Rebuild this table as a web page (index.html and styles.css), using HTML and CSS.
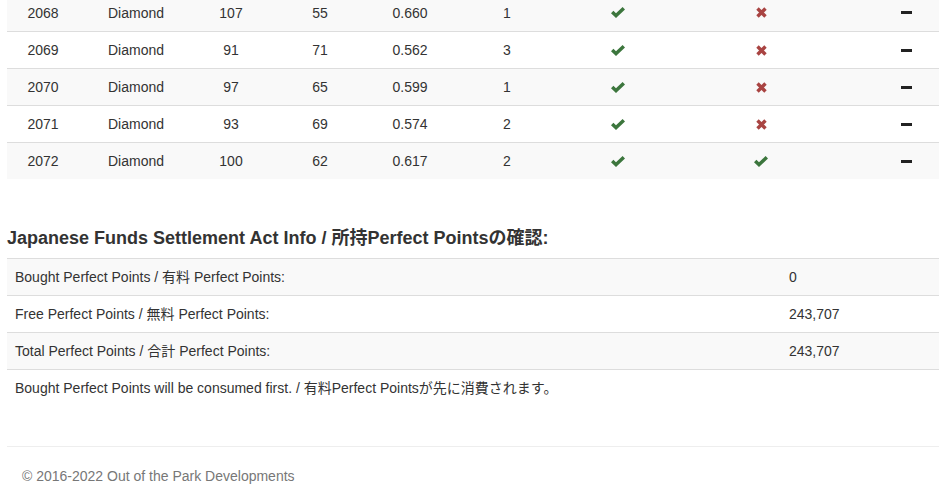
FILE: index.html
```html
<!DOCTYPE html>
<html>
<head>
<meta charset="utf-8">
<link rel="stylesheet" href="styles.css">
</head>
<body>
<div class="page">
  <div class="grid-table">
    <div class="row shade">
      <div>2068</div><div>Diamond</div><div>107</div><div>55</div><div>0.660</div><div>1</div>
      <div><svg class="ok" viewBox="0 0 14 11"><polygon points="0,6.2 2.4,3.8 5,6.3 11.6,0 14,2.4 5,11"/></svg></div>
      <div><svg class="no" viewBox="0 0 11 11"><path d="M1.5 1.5L9.5 9.5M9.5 1.5L1.5 9.5"/></svg></div>
      <div class="last"><span class="minus"></span></div>
    </div>
    <div class="row">
      <div>2069</div><div>Diamond</div><div>91</div><div>71</div><div>0.562</div><div>3</div>
      <div><svg class="ok" viewBox="0 0 14 11"><polygon points="0,6.2 2.4,3.8 5,6.3 11.6,0 14,2.4 5,11"/></svg></div>
      <div><svg class="no" viewBox="0 0 11 11"><path d="M1.5 1.5L9.5 9.5M9.5 1.5L1.5 9.5"/></svg></div>
      <div class="last"><span class="minus"></span></div>
    </div>
    <div class="row shade">
      <div>2070</div><div>Diamond</div><div>97</div><div>65</div><div>0.599</div><div>1</div>
      <div><svg class="ok" viewBox="0 0 14 11"><polygon points="0,6.2 2.4,3.8 5,6.3 11.6,0 14,2.4 5,11"/></svg></div>
      <div><svg class="no" viewBox="0 0 11 11"><path d="M1.5 1.5L9.5 9.5M9.5 1.5L1.5 9.5"/></svg></div>
      <div class="last"><span class="minus"></span></div>
    </div>
    <div class="row">
      <div>2071</div><div>Diamond</div><div>93</div><div>69</div><div>0.574</div><div>2</div>
      <div><svg class="ok" viewBox="0 0 14 11"><polygon points="0,6.2 2.4,3.8 5,6.3 11.6,0 14,2.4 5,11"/></svg></div>
      <div><svg class="no" viewBox="0 0 11 11"><path d="M1.5 1.5L9.5 9.5M9.5 1.5L1.5 9.5"/></svg></div>
      <div class="last"><span class="minus"></span></div>
    </div>
    <div class="row shade">
      <div>2072</div><div>Diamond</div><div>100</div><div>62</div><div>0.617</div><div>2</div>
      <div><svg class="ok" viewBox="0 0 14 11"><polygon points="0,6.2 2.4,3.8 5,6.3 11.6,0 14,2.4 5,11"/></svg></div>
      <div><svg class="ok" viewBox="0 0 14 11"><polygon points="0,6.2 2.4,3.8 5,6.3 11.6,0 14,2.4 5,11"/></svg></div>
      <div class="last"><span class="minus"></span></div>
    </div>
  </div>

  <h4 class="title">Japanese Funds Settlement Act Info / 所持Perfect Pointsの確認:</h4>

  <div class="info">
    <div class="irow shade"><div class="label">Bought Perfect Points / 有料 Perfect Points:</div><div class="val">0</div></div>
    <div class="irow"><div class="label">Free Perfect Points / 無料 Perfect Points:</div><div class="val">243,707</div></div>
    <div class="irow shade"><div class="label">Total Perfect Points / 合計 Perfect Points:</div><div class="val">243,707</div></div>
    <div class="irow note"><div class="label">Bought Perfect Points will be consumed first. / 有料Perfect Pointsが先に消費されます。</div></div>
  </div>

  <hr class="rule">
  <footer class="foot">© 2016-2022 Out of the Park Developments</footer>
</div>
</body>
</html>
```

FILE: styles.css
```css
html, body {
  margin: 0;
  padding: 0;
  background: #fff;
  overflow: hidden;
}
body {
  font-family: "Liberation Sans", Arial, "Noto Sans CJK JP", sans-serif;
  font-size: 14px;
  line-height: 20px;
  color: #333;
}
.page {
  padding-left: 7px;
  margin-top: -6px;
}
.grid-table {
  width: 932px;
  margin-bottom: 49px;
}
.row {
  display: grid;
  grid-template-columns: 72px 114px 76px 102px 78px 116px 106px 180px 1fr;
  border-top: 1px solid #ddd;
  height: 36px;
  align-items: center;
}
.row:first-child { border-top: none; height: 37px; }
.row > div {
  text-align: center;
  display: flex;
  justify-content: center;
  align-items: center;
}
.row > div.last { padding-left: 22px; }
.shade { background: #f9f9f9; }
.ok { width: 14px; height: 11px; fill: #3c763d; display: block; }
.no { width: 11px; height: 11px; display: block; stroke: #a94442; stroke-width: 3.4; fill: none; }
.minus { display: block; width: 11px; height: 3px; background: #222; }
.title {
  margin: 0 0 10px 0;
  font-size: 18px;
  line-height: 20px;
  font-weight: bold;
  color: #333;
}
.info {
  width: 932px;
}
.irow {
  display: grid;
  grid-template-columns: 774px 1fr;
  border-top: 1px solid #ddd;
}
.irow > div { padding: 8px 8px; }
.rule {
  margin: 40px 0 19px 0;
  border: 0;
  border-top: 1px solid #eee;
  width: 932px;
}
.foot {
  padding-left: 15px;
  color: #777;
}
```
